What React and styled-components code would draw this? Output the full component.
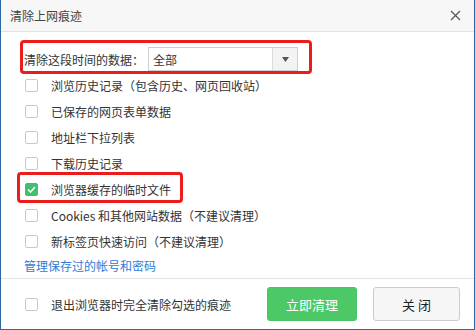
import React from 'react';
import styled, { createGlobalStyle } from 'styled-components';

const GlobalStyle = createGlobalStyle`
  html, body {
    margin: 0;
    padding: 0;
    background: #fff;
  }
  body {
    font-family: "Noto Sans CJK SC", "Liberation Sans", sans-serif;
    font-size: 12px;
    color: #333;
  }
`;

// Dialog window with a blue frame
const Window = styled.div`
  width: 475px;
  height: 330px;
  box-sizing: border-box;
  border: 1px solid #2b68a3;
  border-top: none;
  display: flex;
  flex-direction: column;
  background: #fff;
`;

const TitleBar = styled.div`
  height: 31px;
  flex: none;
  display: flex;
  align-items: center;
  justify-content: space-between;
  padding: 0 9px;
  background: #f7f7f7;
  border-bottom: 1px solid #e2e2e2;
  font-size: 12px;
  color: #444;
`;

const CloseIcon = styled.svg`
  width: 11px;
  height: 11px;
  margin-right: 4px;
`;

const Content = styled.div`
  flex: 1;
  padding-top: 14px;
  display: flex;
  flex-direction: column;
`;

// a row, optionally circled by a red annotation frame
const Row = styled.div`
  position: relative;
  height: 26px;
  display: flex;
  align-items: center;
  padding-left: ${p => p.$indent || 24}px;

  &::before {
    content: '';
    display: ${p => (p.$mark ? 'block' : 'none')};
    position: absolute;
    left: ${p => p.$mark && p.$mark.left}px;
    width: ${p => p.$mark && p.$mark.width}px;
    top: ${p => p.$mark && p.$mark.top}px;
    bottom: ${p => p.$mark && p.$mark.bottom}px;
    border: 3px solid #ea1c1c;
    border-radius: 4px;
    pointer-events: none;
  }
`;

const Label = styled.span`
  color: #333;
  white-space: nowrap;
`;

const Select = styled.div`
  margin-left: 4px;
  width: 150px;
  height: 24px;
  box-sizing: border-box;
  border: 1px solid #cfcfcf;
  display: flex;
  align-items: stretch;
  background: #fff;
`;

const SelectValue = styled.div`
  flex: 1;
  display: flex;
  align-items: center;
  padding-left: 4px;
  color: #333;
`;

const SelectArrow = styled.div`
  width: 24px;
  border-left: 1px solid #dcdcdc;
  background: #f3f3f3;
  display: flex;
  align-items: center;
  justify-content: center;
`;

const Box = styled.span`
  width: 13px;
  height: 13px;
  box-sizing: border-box;
  flex: none;
  border-radius: 2px;
  border: 1px solid ${p => (p.$checked ? '#3fc06c' : '#c9c9c9')};
  background: ${p => (p.$checked ? '#3fc06c' : '#fff')};
  display: flex;
  align-items: center;
  justify-content: center;
  margin-right: 13px;
`;

const Link = styled.a`
  display: flex;
  align-items: center;
  height: 22px;
  padding-left: 23px;
  color: #2f7bd4;
  text-decoration: none;
`;

const Footer = styled.div`
  height: 51px;
  flex: none;
  box-sizing: border-box;
  border-top: 1px solid #e4e4e4;
  display: flex;
  align-items: center;
  padding: 0 14px 0 24px;
`;

const FooterOption = styled.div`
  flex: 1;
  display: flex;
  align-items: center;
`;

const Button = styled.button`
  height: 34px;
  width: ${p => p.$width}px;
  box-sizing: border-box;
  border-radius: 3px;
  font-family: inherit;
  font-size: 13px;
  cursor: pointer;
  margin-left: ${p => p.$gap || 0}px;
  border: 1px solid ${p => (p.$primary ? '#47c463' : '#cccccc')};
  background: ${p => (p.$primary ? '#4cc966' : '#f6f6f6')};
  color: ${p => (p.$primary ? '#fff' : '#222')};
`;

const Check = () => (
  <svg width="9" height="7" viewBox="0 0 9 7">
    <path d="M1 3.5 L3.5 6 L8 1" fill="none" stroke="#fff" strokeWidth="1.6" />
  </svg>
);

const options = [
  { text: '浏览历史记录（包含历史、网页回收站）' },
  { text: '已保存的网页表单数据' },
  { text: '地址栏下拉列表' },
  { text: '下载历史记录' },
  { text: '浏览器缓存的临时文件', checked: true, mark: { left: 16, width: 160, top: -4, bottom: -1 } },
  { text: 'Cookies 和其他网站数据（不建议清理）' },
  { text: '新标签页快速访问（不建议清理）' },
];

const App = () => {
  return (
    <>
      <GlobalStyle />
      <Window>
        <TitleBar>
          <span>清除上网痕迹</span>
          <CloseIcon viewBox="0 0 11 11">
            <path d="M1 1 L10 10 M10 1 L1 10" stroke="#555" strokeWidth="1.2" />
          </CloseIcon>
        </TitleBar>
        <Content>
          <Row $indent={23} $mark={{ left: 19, width: 286, top: -6, bottom: -2 }}>
            <Label>清除这段时间的数据：</Label>
            <Select>
              <SelectValue>全部</SelectValue>
              <SelectArrow>
                <svg width="7" height="5" viewBox="0 0 7 5">
                  <path d="M0 0 H7 L3.5 5 Z" fill="#555" />
                </svg>
              </SelectArrow>
            </Select>
          </Row>
          {options.map(o => (
            <Row key={o.text} $mark={o.mark}>
              <Box $checked={o.checked}>{o.checked && <Check />}</Box>
              <Label>{o.text}</Label>
            </Row>
          ))}
          <Link href="#">管理保存过的帐号和密码</Link>
        </Content>
        <Footer>
          <FooterOption>
            <Box />
            <Label>退出浏览器时完全清除勾选的痕迹</Label>
          </FooterOption>
          <Button $primary $width={90}>立即清理</Button>
          <Button $width={87} $gap={16}>关 闭</Button>
        </Footer>
      </Window>
    </>
  );
};

export default App;
